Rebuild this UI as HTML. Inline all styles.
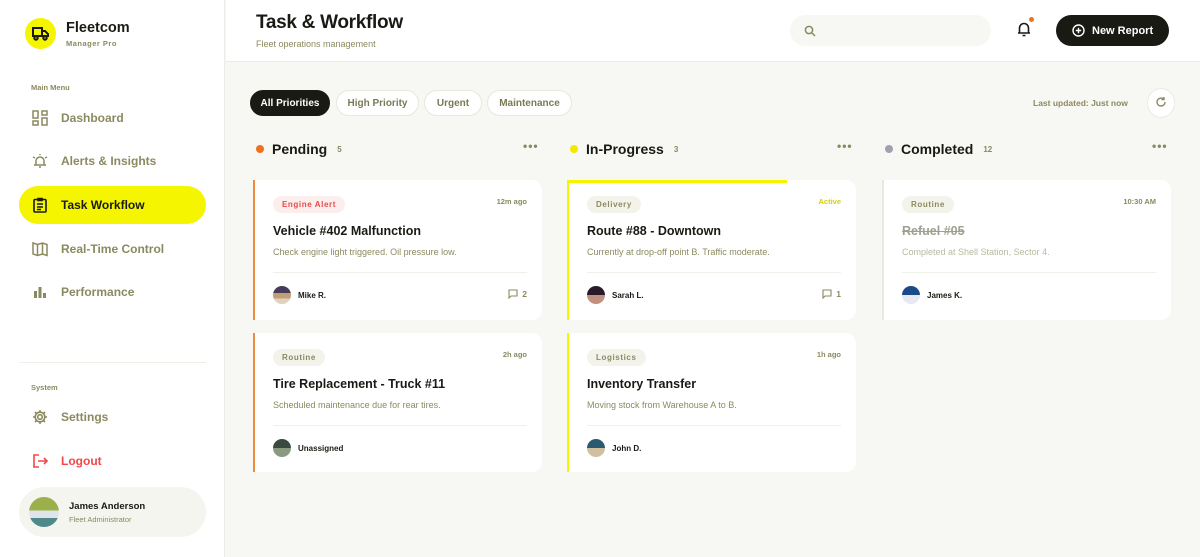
<!DOCTYPE html>
<html><head><meta charset="utf-8"><style>
*{box-sizing:border-box;margin:0;padding:0}
body{width:1200px;height:557px;overflow:hidden;font-family:"Liberation Sans",sans-serif;background:#f7f7f3;position:relative;color:#1a1a14}
.abs{position:absolute}
.side{left:0;top:0;width:225px;height:557px;background:#fff;border-right:1px solid #ecece6}
.olive{color:#8a8a60}
.nav{position:absolute;left:19px;width:187px;height:38px;border-radius:19px;display:flex;align-items:center;padding-left:13px;font-size:12px;color:#8a8a60;font-weight:bold}
.nav svg{margin-right:13px}
.head{left:226px;top:0;width:974px;height:62px;background:#fff;border-bottom:1px solid #ecece6}
.chip{position:absolute;top:90px;height:26px;border-radius:13px;background:#fff;border:1px solid #e8e8e0;font-size:10px;font-weight:bold;color:#7a7a55;display:flex;align-items:center;justify-content:center}
.colh{position:absolute;top:141px;font-size:14px;font-weight:bold;display:flex;align-items:center}
.colh .d{width:8px;height:8px;border-radius:50%;margin-right:8px}
.colh small{font-size:8px;color:#8a8a60;margin-left:10px}
.dots{position:absolute;top:139px;font-size:12px;color:#8a8a60;font-weight:bold;letter-spacing:1px}
.card{position:absolute;width:289px;background:#fff;border-radius:10px}
.tag{position:absolute;left:18px;top:16px;height:17px;padding:0 9px;border-radius:9px;font-size:8px;font-weight:bold;letter-spacing:.6px;display:flex;align-items:center;background:#f3f3ec;color:#8a8a60}
.time{position:absolute;right:15px;top:17px;font-size:7.5px;font-weight:bold;color:#8a8a60}
.ttl{position:absolute;left:18px;top:44px;font-size:12.5px;font-weight:bold}
.desc{position:absolute;left:18px;top:67px;font-size:9px;color:#8a8a60}
.hr{position:absolute;left:18px;right:15px;top:92px;border-top:1px solid #f0f0ea}
.av{position:absolute;left:18px;top:106px;width:18px;height:18px;border-radius:50%}
.nm{position:absolute;left:43px;top:111px;font-size:8px;font-weight:bold}
.cm{position:absolute;right:15px;top:109px;font-size:8.5px;font-weight:bold;color:#8a8a60;display:flex;align-items:center;gap:4px}
</style></head><body>
<div class="abs side"></div>
<div class="abs" style="left:25px;top:18px;width:31px;height:31px;border-radius:50%;background:#f5f500"></div>
<svg class="abs" style="left:31px;top:25px" width="19" height="17" viewBox="0 0 19 17" fill="none" stroke="#1a1a14" stroke-width="2"><path d="M2 3h9v8H2zM11 6h3l3 3v2h-6z"/><circle cx="5" cy="13" r="1.7" fill="#f5f500"/><circle cx="14" cy="13" r="1.7" fill="#f5f500"/></svg>
<div class="abs" style="left:66px;top:20px;font-size:14.5px;font-weight:bold">Fleetcom</div>
<div class="abs olive" style="left:66px;top:39px;font-size:7.5px;font-weight:bold;letter-spacing:.5px">Manager Pro</div>
<div class="abs olive" style="left:31px;top:83px;font-size:7.5px;font-weight:bold">Main Menu</div>
<div class="nav" style="top:99px"><svg width="16" height="16" viewBox="0 0 16 16" fill="none" stroke="#8a8a60" stroke-width="1.5"><rect x="1" y="1" width="5" height="7"/><rect x="10" y="1" width="5" height="4"/><rect x="1" y="11" width="5" height="4"/><rect x="10" y="8" width="5" height="7"/></svg>Dashboard</div>
<div class="nav" style="top:142px"><svg width="16" height="16" viewBox="0 0 16 16" fill="none" stroke="#8a8a60" stroke-width="1.5"><path d="M4 12V8a4 4 0 018 0v4zM2 12h12M7 14h2M1 4l2 1M15 4l-2 1M8 1v1"/></svg>Alerts &amp; Insights</div>
<div class="nav" style="top:186px;background:#f5f500;color:#1a1a14"><svg width="16" height="16" viewBox="0 0 16 16" fill="none" stroke="#1a1a14" stroke-width="1.6"><rect x="2" y="2.5" width="12" height="12.5" rx="1"/><path d="M6 1.5h4v2H6zM5 7h6M5 10h6M5 12.5h4"/></svg>Task Workflow</div>
<div class="nav" style="top:230px"><svg width="16" height="16" viewBox="0 0 16 16" fill="none" stroke="#8a8a60" stroke-width="1.5"><path d="M1 2l4.5 1.5L10.5 2 15 3.5v11L10.5 13l-5 1.5L1 13zM5.5 3.5v11M10.5 2v11"/></svg>Real-Time Control</div>
<div class="nav" style="top:273px"><svg width="16" height="16" viewBox="0 0 16 16" fill="#8a8a60"><rect x="2" y="7" width="3" height="7"/><rect x="6.5" y="3" width="3" height="11"/><rect x="11" y="9" width="3" height="5"/></svg>Performance</div>
<div class="abs" style="left:19px;top:362px;width:187px;border-top:1px solid #efefe8"></div>
<div class="abs olive" style="left:31px;top:383px;font-size:7.5px;font-weight:bold">System</div>
<div class="nav" style="top:398px"><svg width="16" height="16" viewBox="0 0 16 16" fill="none" stroke="#8a8a60" stroke-width="1.6"><circle cx="8" cy="8" r="2.3"/><path d="M8 1v2M8 13v2M1 8h2M13 8h2M3 3l1.5 1.5M11.5 11.5L13 13M3 13l1.5-1.5M11.5 4.5L13 3"/><circle cx="8" cy="8" r="4.8"/></svg>Settings</div>
<div class="nav" style="top:442px;color:#f04848"><svg width="16" height="16" viewBox="0 0 16 16" fill="none" stroke="#f04848" stroke-width="1.6"><path d="M7 2H2v12h5M6 8h9M12 5l3 3-3 3"/></svg>Logout</div>
<div class="abs" style="left:19px;top:487px;width:187px;height:50px;border-radius:25px;background:#f5f5ef"></div>
<div class="abs" style="left:29px;top:497px;width:30px;height:30px;border-radius:50%;background:linear-gradient(#9bb04a 0 45%,#dfe5ea 45% 70%,#4f8a8a 70%)"></div>
<div class="abs" style="left:69px;top:501px;font-size:9.5px;font-weight:bold">James Anderson</div>
<div class="abs olive" style="left:69px;top:515px;font-size:7.5px">Fleet Administrator</div>

<div class="abs head"></div>
<div class="abs" style="left:256px;top:12px;font-size:19px;font-weight:bold;letter-spacing:-.3px">Task &amp; Workflow</div>
<div class="abs olive" style="left:256px;top:39px;font-size:9px">Fleet operations management</div>
<div class="abs" style="left:790px;top:15px;width:201px;height:31px;border-radius:16px;background:#f7f7f3"></div>
<svg class="abs" style="left:804px;top:25px" width="12" height="12" viewBox="0 0 12 12" fill="none" stroke="#8a8a60" stroke-width="1.5"><circle cx="5" cy="5" r="3.6"/><path d="M8 8l3 3"/></svg>
<svg class="abs" style="left:1016px;top:20px" width="16" height="17" viewBox="0 0 16 17" fill="none" stroke="#1a1a14" stroke-width="1.6"><path d="M3.5 13V8a4.5 4.5 0 019 0v5zM2 13h12M6.5 15.5h3"/></svg>
<div class="abs" style="left:1029px;top:17px;width:5px;height:5px;border-radius:50%;background:#f07020"></div>
<div class="abs" style="left:1056px;top:15px;width:113px;height:31px;border-radius:16px;background:#1a1a14;color:#fff;font-size:11px;font-weight:bold;display:flex;align-items:center;padding-left:16px"><svg width="13" height="13" viewBox="0 0 13 13" fill="none" stroke="#fff" stroke-width="1.4" style="margin-right:7px"><circle cx="6.5" cy="6.5" r="5.5"/><path d="M6.5 3.8v5.4M3.8 6.5h5.4"/></svg>New Report</div>

<div class="chip" style="left:250px;width:80px;background:#1a1a14;color:#fff;border-color:#1a1a14">All Priorities</div>
<div class="chip" style="left:336px;width:83px">High Priority</div>
<div class="chip" style="left:424px;width:58px">Urgent</div>
<div class="chip" style="left:487px;width:85px">Maintenance</div>
<div class="abs olive" style="left:1033px;top:98px;font-size:8.5px;font-weight:bold">Last updated: Just now</div>
<div class="abs" style="left:1147px;top:88px;width:28px;height:30px;border-radius:50%;background:#fff;border:1px solid #ecece6"></div>
<svg class="abs" style="left:1155px;top:96px" width="12" height="12" viewBox="0 0 12 12" fill="none" stroke="#8a8a60" stroke-width="1.4"><path d="M10 6A4 4 0 112 6a4 4 0 016.5-3M9 1v2.5H6.5"/></svg>

<div class="colh" style="left:256px"><span class="d" style="background:#f07020"></span>Pending<small>5</small></div>
<div class="dots" style="left:523px">•••</div>
<div class="colh" style="left:570px"><span class="d" style="background:#f5e800"></span>In-Progress<small>3</small></div>
<div class="dots" style="left:837px">•••</div>
<div class="colh" style="left:885px"><span class="d" style="background:#a0a0b0"></span>Completed<small>12</small></div>
<div class="dots" style="left:1152px">•••</div>

<div class="card" style="left:253px;top:180px;height:140px;border-left:2px solid #f08a3c;border-radius:0 10px 10px 0">
<div class="tag" style="background:#fdeeee;color:#e84848">Engine Alert</div><div class="time">12m ago</div>
<div class="ttl">Vehicle #402 Malfunction</div><div class="desc">Check engine light triggered. Oil pressure low.</div><div class="hr"></div>
<div class="av" style="background:linear-gradient(#4a3a5a 0 40%,#c0a070 40% 70%,#e0d0c0 70%)"></div><div class="nm">Mike R.</div>
<div class="cm"><svg width="10" height="10" viewBox="0 0 10 10" fill="none" stroke="#8a8a60" stroke-width="1.1"><path d="M1 1h8v6H3L1 9z"/></svg>2</div></div>
<div class="card" style="left:253px;top:333px;height:139px;border-left:2px solid #f08a3c;border-radius:0 10px 10px 0">
<div class="tag">Routine</div><div class="time">2h ago</div>
<div class="ttl">Tire Replacement - Truck #11</div><div class="desc">Scheduled maintenance due for rear tires.</div><div class="hr"></div>
<div class="av" style="background:linear-gradient(#3a4a40 0 50%,#8a9a80 50%)"></div><div class="nm">Unassigned</div></div>

<div class="card" style="left:567px;top:180px;height:140px;border-left:2px solid #f5f500;border-radius:0 10px 10px 0">
<div class="abs" style="left:0;top:0;width:218px;height:3px;background:#f5f500"></div>
<div class="tag">Delivery</div><div class="time" style="color:#d8d000">Active</div>
<div class="ttl">Route #88 - Downtown</div><div class="desc">Currently at drop-off point B. Traffic moderate.</div><div class="hr"></div>
<div class="av" style="background:linear-gradient(#2a1a2a 0 50%,#c09080 50%)"></div><div class="nm">Sarah L.</div>
<div class="cm"><svg width="10" height="10" viewBox="0 0 10 10" fill="none" stroke="#8a8a60" stroke-width="1.1"><path d="M1 1h8v6H3L1 9z"/></svg>1</div></div>
<div class="card" style="left:567px;top:333px;height:139px;border-left:2px solid #f5f500;border-radius:0 10px 10px 0">
<div class="tag">Logistics</div><div class="time">1h ago</div>
<div class="ttl">Inventory Transfer</div><div class="desc">Moving stock from Warehouse A to B.</div><div class="hr"></div>
<div class="av" style="background:linear-gradient(#2a5a70 0 50%,#d0c0a0 50%)"></div><div class="nm">John D.</div></div>

<div class="card" style="left:882px;top:180px;height:140px;border-left:2px solid #e8e8e0;border-radius:0 10px 10px 0">
<div class="tag">Routine</div><div class="time">10:30 AM</div>
<div class="ttl" style="color:#a0a090;text-decoration:line-through">Refuel #05</div><div class="desc" style="color:#b8b8a0">Completed at Shell Station, Sector 4.</div><div class="hr"></div>
<div class="av" style="background:linear-gradient(#1a4a8a 0 50%,#e8e8f0 50%)"></div><div class="nm">James K.</div></div>
</body></html>
